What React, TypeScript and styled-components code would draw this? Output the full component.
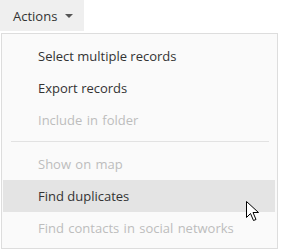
import React from "react";
import styled, { createGlobalStyle } from "styled-components";

const Global = createGlobalStyle`
  html, body { margin: 0; padding: 0; background: #ffffff; }
  body { font-family: "Open Sans", "Noto Sans", sans-serif; }
`;

const Page = styled.div`
  position: relative;
  width: 304px;
  height: 251px;
  overflow: hidden;
`;

const Trigger = styled.button`
  display: flex;
  align-items: center;
  gap: 8px;
  height: 31px;
  width: 84px;
  padding: 0 0 0 13px;
  border: none;
  background: #efefef;
  color: #333333;
  font-family: "Open Sans", "Noto Sans", sans-serif;
  font-size: 13px;
  cursor: pointer;
`;

const Caret = styled.span`
  width: 0;
  height: 0;
  border-left: 4px solid transparent;
  border-right: 4px solid transparent;
  border-top: 4px solid #555555;
`;

const Menu = styled.ul`
  list-style: none;
  margin: 2px 0 0 1px;
  padding: 6px 2px 4px 1px;
  width: 272px;
  background: #fafafa;
  border: 1px solid #dddddd;
`;

const Item = styled.li<{ $disabled?: boolean; $active?: boolean }>`
  height: 32px;
  display: flex;
  align-items: center;
  padding-left: 35px;
  font-size: 13px;
  color: ${(p) => (p.$disabled ? "#bdbdbd" : "#333333")};
  background: ${(p) => (p.$active ? "#e4e4e4" : "transparent")};
  word-spacing: ${(p) => (p.$disabled ? "1px" : "0")};
`;

const Separator = styled.li`
  height: 1px;
  margin: 5px 6px 6px 8px;
  background: #e2e2e2;
`;

const Cursor = styled.svg`
  position: absolute;
  left: 246px;
  top: 201px;
`;

export default function App() {
  return (
    <Page>
      <Global />
      <Trigger>
        Actions
        <Caret />
      </Trigger>
      <Menu>
        <Item>Select multiple records</Item>
        <Item>Export records</Item>
        <Item $disabled>Include in folder</Item>
        <Separator />
        <Item $disabled>Show on map</Item>
        <Item $active>Find duplicates</Item>
        <Item $disabled>Find contacts in social networks</Item>
      </Menu>
      <Cursor width="13" height="21" viewBox="0 0 13 21">
        <path
          d="M0.5 0.5 L0.5 16.5 L4.5 12.5 L7.5 19.5 L10 18.5 L7 11.5 L12.5 11.5 Z"
          fill="#ffffff"
          stroke="#000000"
          strokeWidth="1"
          strokeLinejoin="miter"
        />
      </Cursor>
    </Page>
  );
}
